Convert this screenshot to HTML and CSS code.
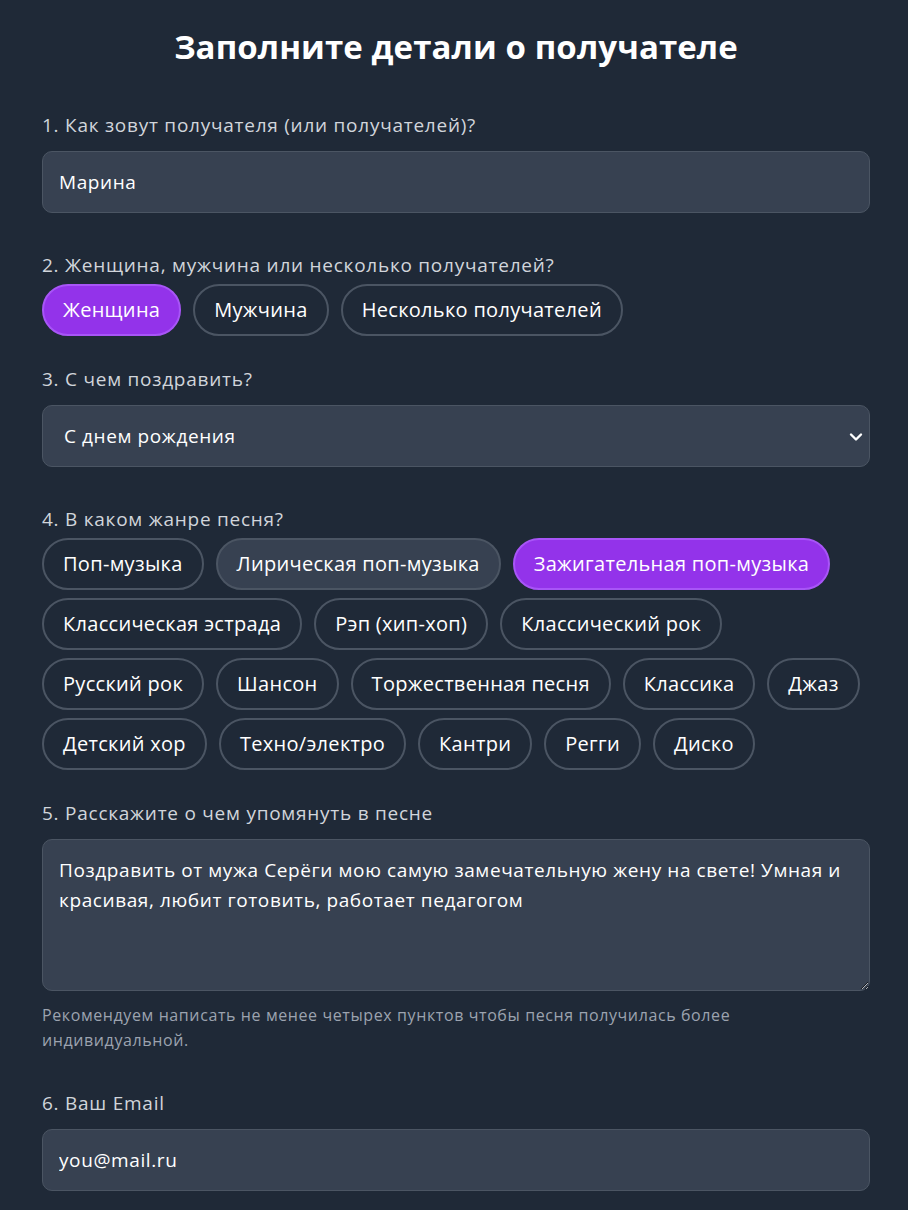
FILE: index.html
```html
<!DOCTYPE html>
<html lang="ru">
<head>
<meta charset="utf-8">
<title>Заполните детали о получателе</title>
<link rel="stylesheet" href="styles.css">
</head>
<body>
<main class="form">
  <h1 class="title">Заполните детали о получателе</h1>

  <section class="field">
    <label class="label label-input">1. Как зовут получателя (или получателей)?</label>
    <input class="input" type="text" value="Марина">
  </section>

  <section class="field field-chips">
    <div class="label label-chips">2. Женщина, мужчина или несколько получателей?</div>
    <div class="chips">
      <button class="chip chip-active">Женщина</button>
      <button class="chip">Мужчина</button>
      <button class="chip">Несколько получателей</button>
    </div>
  </section>

  <section class="field">
    <label class="label label-input">3. С чем поздравить?</label>
    <div class="select-wrap">
      <select class="input select">
        <option>С днем рождения</option>
      </select>
      <svg class="select-arrow" width="14" height="10" viewBox="0 0 14 10"><path d="M2 2.5 L7 7.5 L12 2.5" fill="none" stroke="#ffffff" stroke-width="2.4" stroke-linecap="round" stroke-linejoin="round"/></svg>
    </div>
  </section>

  <section class="field field-chips">
    <div class="label label-chips">4. В каком жанре песня?</div>
    <div class="chips">
      <button class="chip">Поп-музыка</button>
      <button class="chip chip-hover">Лирическая поп-музыка</button>
      <button class="chip chip-active">Зажигательная поп-музыка</button>
      <button class="chip">Классическая эстрада</button>
      <button class="chip">Рэп (хип-хоп)</button>
      <button class="chip">Классический рок</button>
      <button class="chip">Русский рок</button>
      <button class="chip">Шансон</button>
      <button class="chip">Торжественная песня</button>
      <button class="chip">Классика</button>
      <button class="chip">Джаз</button>
      <button class="chip">Детский хор</button>
      <button class="chip">Техно/электро</button>
      <button class="chip">Кантри</button>
      <button class="chip">Регги</button>
      <button class="chip">Диско</button>
    </div>
  </section>

  <section class="field field-text">
    <label class="label label-input">5. Расскажите о чем упомянуть в песне</label>
    <textarea class="input textarea">Поздравить от мужа Серёги мою самую замечательную жену на свете! Умная и красивая, любит готовить, работает педагогом</textarea>
    <p class="hint">Рекомендуем написать не менее четырех пунктов чтобы песня получилась более индивидуальной.</p>
  </section>

  <section class="field">
    <label class="label label-input">6. Ваш Email</label>
    <input class="input" type="email" value="you@mail.ru">
  </section>
</main>
</body>
</html>
```

FILE: styles.css
```css
* { box-sizing: border-box; }

html, body {
  margin: 0;
  padding: 0;
  background: #1f2937;
}

body {
  font-family: "Open Sans", "Noto Sans", sans-serif;
  color: #ffffff;
}

.form {
  width: 828px;
  margin-left: 42px;
  padding-top: 27px;
  display: flex;
  flex-direction: column;
}

.title {
  margin: 0 0 44px 0;
  font-size: 33px;
  letter-spacing: 0.1px;
  line-height: 40px;
  font-weight: 700;
  text-align: center;
  color: #ffffff;
}

.field {
  display: flex;
  flex-direction: column;
  margin-bottom: 38px;
}

.field-chips {
  margin-bottom: 29px;
}

.label {
  display: block;
  font-size: 19px;
  letter-spacing: 0.75px;
  line-height: 28px;
  color: #d1d5db;
}

.label-input { margin-bottom: 12px; }
.label-chips { margin-bottom: 5px; }

.input {
  width: 100%;
  height: 62px;
  padding: 16px;
  border: 1px solid #4b5563;
  border-radius: 10px;
  background: #374151;
  color: #ffffff;
  font-family: inherit;
  font-size: 19px;
  letter-spacing: 0.6px;
  line-height: 28px;
  outline: none;
}

.select-wrap {
  position: relative;
}

.select {
  appearance: none;
  -webkit-appearance: none;
  padding-left: 21px;
}

.select-arrow {
  position: absolute;
  right: 7px;
  top: 27px;
}

.textarea {
  height: 152px;
  line-height: 30px;
  padding-top: 15px;
  resize: vertical;
  display: block;
}

.hint {
  margin: 12px 0 0 0;
  font-size: 16px;
  letter-spacing: 0.6px;
  line-height: 25px;
  color: #9ca3af;
}

.field-text {
  margin-bottom: 36px;
}

.chips {
  display: flex;
  flex-wrap: wrap;
  gap: 8px 12px;
}

.chip {
  height: 52px;
  padding: 0 19px;
  border: 2px solid #4b5563;
  border-radius: 999px;
  background: #1f2937;
  color: #ffffff;
  font-family: inherit;
  font-size: 20px;
  letter-spacing: 0.3px;
  line-height: 28px;
  cursor: pointer;
}

.chip-hover {
  background: #374151;
}

.chip-active {
  background: #9333ea;
  border-color: #a855f7;
  color: #ffffff;
}
```
